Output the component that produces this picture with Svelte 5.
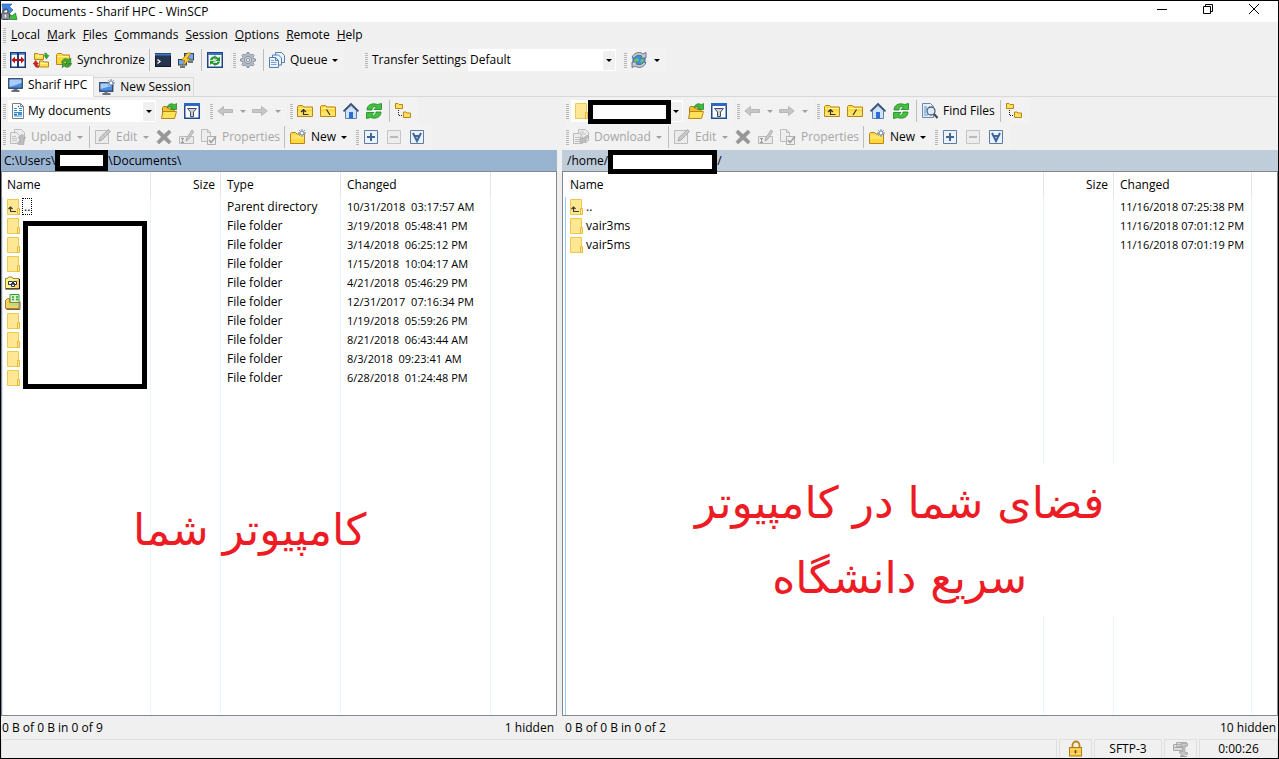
<script>
  const folder =
    '<path d="M.5 13.500v-10l1-1h4l1.500 1.500h8.500v9.500z" fill="#ffd83d" stroke="#b8861b"/><path d="M1.500 5.500h13" stroke="#fff3a6"/><path d="M1 8.500h14v4.500H1z" fill="#ffe566"/>';

  const star =
    '<path d="M12 0v8M8 4h8M9.200 1.200l5.600 5.600M14.800 1.200 9.200 6.800"/><circle cx="12" cy="4" r="2" fill="#fff"/>';

  const icons = {
    app: '<path d="M1 0h10L8.500 2.500 12 6 9 9 5.500 5.500 2 8z" fill="#3f86e6" stroke="#1f58ac" stroke-width=".6"/><path d="M8 9.500l3 2.500 3.500-3L16 15.500H8.500l1.500-2z" fill="#3ec23b" stroke="#157a1a" stroke-width=".7"/><path d="M2 9V7.500a2.500 2.500 0 0 1 5 0V9" fill="none" stroke="#555b66" stroke-width="1.500"/><rect x=".5" y="9" width="8" height="6.500" rx="1" fill="#8b919c" stroke="#444a55"/><path d="M4.500 10.500v3" stroke="#eee" stroke-width="1.500"/>',
    split: '<rect x=".75" y=".75" width="14.500" height="14.500" fill="#fff" stroke="#143a77" stroke-width="1.500"/><path d="M1 2h14" stroke="#3c73c4" stroke-width="1.500"/><path d="M8 1v14" stroke="#143a77" stroke-width="2"/><path d="M1.500 8 5 4.500V7h6V4.500L14.500 8 11 11.500V9H5v2.500z" fill="#c40d0d"/>',
    swap: '<path d="M1.500 7.500v-6H5l1 1h4.500v5z" fill="#ffdf4d" stroke="#b8861b"/><path d="M6.500 15V9H10l1 1h4.500v5z" fill="#ffdf4d" stroke="#b8861b"/><path d="M7.500 11.500H15" stroke="#fff3a6"/><path d="M2.500 4h7.500" stroke="#fff3a6"/><path d="M11.500 1c2 0 3 1 3 2.500H16L13.500 7 11 3.500h1.500z" fill="#35a834" stroke="#1c7a20" stroke-width=".5"/><path d="M5.500 15.500C2.500 15.500 1.500 14 1.500 12H0l2.700-3.500L5.500 12H4c0 1 .5 1.500 1.500 1.500z" fill="#d81f1f" stroke="#9c1010" stroke-width=".5"/>',
    sync: '<path d="M.5 12.500v-10l1-1h4L7 3h6.500v9.500z" fill="#ffd83d" stroke="#b8861b"/><path d="M1.500 4.500H13" stroke="#fff3a6"/><path d="M5.500 10.500c.7-4 5-5 7.500-2.500L14.800 6v5.500H9.500l1.700-1.700c-1.700-1-3.300-.5-4 .7z" fill="#37ae35" stroke="#1d7220" stroke-width=".6"/><path d="M15.500 11.500c-1 4-5 4.700-7.500 2.500L6.300 15.800v-4.600h4.500l-1.500 1.500c1.500 1 3.400.5 4-1.200z" fill="#37ae35" stroke="#1d7220" stroke-width=".6"/>',
    terminal: '<rect x=".5" y="1.500" width="15" height="13" fill="#26344d" stroke="#111c30"/><path d="M0 2.500h16" stroke="#3d77c9" stroke-width="2"/><path d="M2.500 7.500 5 9.500l-2.500 2" fill="none" stroke="#fff" stroke-width="1.300"/>',
    putty: '<rect x="6.500" y="1.500" width="9" height="6.500" fill="#6fa9ef" stroke="#36404f"/><path d="M10 10h5" stroke="#444d5b" stroke-width="1.500"/><rect x=".5" y="7.500" width="8" height="5.500" fill="#6fa9ef" stroke="#36404f"/><path d="M2 15h5" stroke="#444d5b" stroke-width="1.500"/><path d="M9.500 1 3.500 8.500h3.500L4.500 14 12.500 6.500H9L13 1z" fill="#ffcf2e" stroke="#a3741a" stroke-width=".8"/>',
    compare: '<rect x=".75" y=".75" width="14.500" height="14.500" fill="#fff" stroke="#1c467f" stroke-width="1.500"/><path d="M1 2h14" stroke="#3c73c4" stroke-width="2"/><path d="M8 3v12" stroke="#8fa6c4"/><path d="M3 8c.5-4 6-5 8-2l2-1.500V9H8.500L10 7.300C8.300 6 6 6.300 5.500 8z" fill="#249a2b"/><path d="M13 9.500c-.5 4-6 5-8 2L3 13V8.700h4.500L6 10.200c1.400 1.400 4 1.200 4.500-.7z" fill="#249a2b"/>',
    gear: '<g fill="#b9c1cc" stroke="#717c8c" stroke-width=".8"><path d="M7 .5h2l.4 2 1.400.6L12.500 2 14 3.500l-1.100 1.700.6 1.400 2 .4v2l-2 .4-.6 1.400 1.100 1.700-1.500 1.500-1.700-1.100-1.400.6-.4 2H7l-.4-2-1.400-.6L3.500 14 2 12.500l1.100-1.700-.6-1.400-2-.4V7l2-.4.6-1.400L2 3.500 3.500 2l1.700 1.100 1.400-.6z"/><circle cx="8" cy="8" r="3.600" fill="#d7dce3"/><circle cx="8" cy="8" r="1.600" fill="#f2f2f2"/></g>',
    queue: '<g fill="#eaf2fb" stroke="#5580b1"><path d="M6.500.500h6l3 3v7h-9z"/><path d="M3.500 3h6l3 3v7h-9z"/><path d="M.5 5.500h6l3 3v7h-9z"/></g><path d="M6.500 5.500v3h3" fill="none" stroke="#5580b1"/><path d="M2 8.500h3M2 10.500h5.500M2 12.500h5.500" stroke="#7ca3d0"/>',
    globe: '<circle cx="8" cy="8" r="6.200" fill="#3d8fe0" stroke="#2a5f9e" stroke-width=".7"/><path d="M3 8l3-2 2 2-2 3-3-1zM9.500 8l3-2 .5 3-3 2.500z" fill="#6cc46a"/><path d="M1 5.500C2.500 1 8-1 12 2L15 .5V6H9.500l1.500-1.700C8.500 2.500 5 3 3.200 6z" fill="#c3ccd6" stroke="#4f5d6d" stroke-width=".8"/><path d="M15 10.500c-1.500 4.500-7 6.500-11 3.500L1 15.500V10h5.500L5 11.700c2.500 1.800 6 1.300 7.800-1.700z" fill="#c3ccd6" stroke="#4f5d6d" stroke-width=".8"/>',
    monitor: '<rect x=".75" y="1.750" width="13.500" height="9.500" fill="#4a8fe8" stroke="#33415a" stroke-width="1.300"/><path d="M1.500 2.500h12V6l-12 4z" fill="#a9ccf8"/><path d="M5.500 12h4v1.500h-4z" fill="#6b7788"/><path d="M3.500 14h8" stroke="#3d4858" stroke-width="1.500"/>',
    monitorNew: '<rect x=".75" y="3.750" width="13" height="8.500" fill="#4a8fe8" stroke="#33415a" stroke-width="1.300"/><path d="M1.500 4.500h11v2.500l-11 3z" fill="#a9ccf8"/><path d="M5.500 12.500h3V14h-3z" fill="#6b7788"/><path d="M3.500 15h8" stroke="#3d4858" stroke-width="1.500"/><g stroke="#6f8caf">' + star + '</g>',
    doc: '<path d="M2.500.500h8l3 3v12h-11z" fill="#fff" stroke="#767f89"/><path d="M10.500.500v3h3" fill="none" stroke="#767f89"/><path d="M4 5.500h3M4 7.500h3M9 5.500h3M9 7.500h3M4 9.500h8M4 13h8" stroke="#2a8fd8"/><path d="M4 11.500h3M8 11h4M8 3.500h1" stroke="#1c6aae" stroke-width="1.500"/>',
    open: '<path d="M1.500 14.500v-10l1-1h3l1.500 1.500h6v9.500z" fill="#f3c02c" stroke="#a97b12"/><path d="M.5 15.500 2 8.500h13.500l-2 7z" fill="#ffe25a" stroke="#b8861b"/><path d="M6 5C7 .5 11 0 13.500 1.700L15.500.5V6.500h-6l1.700-2C9.500 3.500 7.500 3.500 6 5z" fill="#3dbb3a" stroke="#1c7a20" stroke-width=".7"/>',
    filter: '<rect x=".75" y=".75" width="14.500" height="14.500" fill="#fff" stroke="#1c4c94" stroke-width="1.500"/><path d="M0 1.500h16" stroke="#2e68bd" stroke-width="3"/><path d="M3.500 5.500h9L9.500 9v4.500h-3V9z" fill="#c9d0d8" stroke="#444d58"/>',
    back: '<path d="M.8 8 6.500 3.500v3h9v3h-9v3z" fill="#c6c6c6" stroke="#b2b2b2" stroke-width=".9"/>',
    forward: '<path d="M15.200 8 9.500 3.500v3h-9v3h9v3z" fill="#c6c6c6" stroke="#b2b2b2" stroke-width=".9"/>',
    up: folder + '<path d="M6.500 12V7M4 9 6.500 6.500 9 9M6 11.500h5.500" fill="none" stroke="#33322c" stroke-width="1.200"/>',
    rootBack: folder + '<path d="M6.500 6.500l3.500 5.500" stroke="#33322c" stroke-width="1.200"/>',
    rootFwd: folder + '<path d="M9.500 6.500L6 12" stroke="#33322c" stroke-width="1.200"/>',
    home: '<path d="M2.500 7.500 8 2.500l5.500 5v8h-11z" fill="#cfe4fa" stroke="#5c7fae"/><path d="M6 9h4v6.500H6z" fill="#2d6cd4"/><path d="M.5 8.300 8 1l7.500 7.300" fill="none" stroke="#364f74" stroke-width="1.700"/>',
    refresh: '<path d="M1 7C1 2 6-.5 11.500 1.500L15.500.5V6.500H8L10.500 4C8 3 6 4 6 7z" fill="#43c23f" stroke="#1b8420" stroke-width=".8"/><path d="M15 9c0 5-5 7.500-10.500 5.500L.5 15.500V9.500H8L5.500 12C8 13 10 12 10 9z" fill="#43c23f" stroke="#1b8420" stroke-width=".8"/>',
    tree: '<path d="M.5 5.500v-5H3l1 1h3.500v4zM8.500 14.500v-5.500H11l1 1h3.500v4.500z" fill="#ffe05a" stroke="#b8861b"/><path d="M3.500 7v5.500H8" fill="none" stroke="#222" stroke-dasharray="1 1"/>',
    find: '<path d="M.5.5h8l3 3v11H.5z" fill="#e6f0fa" stroke="#6489b5"/><path d="M2 4h3M2 6h3M2 8h2M2 10h2M2 12h4" stroke="#5b90cc"/><circle cx="9" cy="8" r="4" fill="#dcebf9" stroke="#53606f" stroke-width="1.300"/><path d="m12 11 3.500 4" stroke="#3b4654" stroke-width="2"/>',
    newFolder: '<path d="M.5 14.500V4.500l1-1h4L7 5h7.500v9.500z" fill="#ffd83d" stroke="#b8861b"/><path d="M1 9h13M1.500 7h12" stroke="#fff09a"/><g stroke="#6f8caf">' + star + '</g>',
    upload: '<g fill="#ececec" stroke="#bcbcbc"><path d="M4.500.500h7l3 3v8h-10z"/><path d="M.5 3.500h6l3 3v8h-9z"/></g><path d="M2 7.500h4M2 9.500h5M2 11.500h5" stroke="#c2c2c2"/><path d="M12 5l4 4h-2v6.500H8V13h2.500V9H8z" fill="#bdbdbd" stroke="#a8a8a8" stroke-width=".6"/>',
    download: '<g fill="#ececec" stroke="#bcbcbc"><path d="M5.500.500h7l3 3v8h-10z"/><path d="M.5 4.500h6l3 3v7h-9z"/></g><path d="M2 8.500h4M2 10.500h5M2 12.500h5M7 3h4M7 5h6" stroke="#c2c2c2"/><path d="M14.500 6 16 7.500l-4 4 2 2H7V7.500l2.500 2z" fill="#bdbdbd" stroke="#a8a8a8" stroke-width=".6"/>',
    edit: '<path d="M.5 1.500h13v13H.5z" fill="#ebebeb" stroke="#bdbdbd"/><path d="m4 12 1-3.500 8.500-8 2 2-8.500 8.500z" fill="#c9c9c9" stroke="#a5a5a5" stroke-width=".9"/>',
    del: '<path d="M4 1 9 5.500 14 1l2 2.500L11.500 8l4.500 4.500-2 2.500L9 10.500 4 15l-2-2.500L6.500 8 2 3.500z" fill="#979797" stroke="#868686" stroke-width=".5"/>',
    rename: '<path d="M1.500 7.500h14v7h-14z" fill="#ebebeb" stroke="#b9b9b9"/><path d="M3 9.500h3M3 13.500h3M4.500 9.500v4" stroke="#999"/><path d="m8 12 .8-3L14 1l1.700 1.500-5.200 8z" fill="#cecece" stroke="#a5a5a5" stroke-width=".9"/>',
    props: '<path d="M.5.500h6l3 3v9h-9z" fill="#ededed" stroke="#bdbdbd"/><path d="M6.500.500v3h3" fill="none" stroke="#bdbdbd"/><path d="M6.500 7.500h8v8h-8z" fill="#f0f0f0" stroke="#b0b0b0"/><path d="m8 11 2 2.500L15 7.500" fill="none" stroke="#a1a1a1" stroke-width="1.600"/>',
    plus: '<path d="M1.500 1.500h13v13h-13z" fill="#eaf2fc" stroke="#5f7ca3"/><path d="M8 4v8M4 8h8" stroke="#416597" stroke-width="2"/>',
    minus: '<path d="M1.500 1.500h13v13h-13z" fill="#ededed" stroke="#c5c5c5"/><path d="M4 8h8" stroke="#bbb" stroke-width="2"/>',
    invert: '<path d="M1.500 1.500h13v13h-13z" fill="#eaf2fc" stroke="#5f7ca3"/><path d="m4 4 4 8 4-8M5.500 7h5" fill="none" stroke="#416597" stroke-width="2"/>',
    dir: '<path d="M2.500.5H13.500v15h-11z" fill="#ffe794" stroke="#efc94c"/><path d="M12.500 9.500h2v6h-2z" fill="#ffe794" stroke="#e5b93c"/>',
    parent: '<path d="M2.500.5H13.500v15h-11z" fill="#ffe794" stroke="#efc94c"/><path d="M12.500 9.500h2v6h-2z" fill="#ffe794" stroke="#e5b93c"/><path d="M5.500 12V8M3.500 10 5.500 8l2 2M5 12.500h6" fill="none" stroke="#403c30" stroke-width="1.200"/>',
    shortcut: '<path d="M.5 13.500v-10h2l1-1.500h3.500l1 1.500h6v10z" fill="#fff48c" stroke="#a48a1a"/><path d="M10 5h4v8h-4z" fill="#ffd26b"/><path d="M.5 14h14V4" fill="none" stroke="#111"/><g fill="#fff" stroke="#26304a"><path d="M3.500 6.500h4v3h-4zM8.500 6.500h3v3h-3zM6.500 8.500h3v3h-3z"/></g>',
    library: '<path d="M5 .5h9v9H5z" fill="#d8f5cd" stroke="#2f9e37"/><path d="M7 3h2M11 3h2M7 5.500h2M11 5.500h2" stroke="#2f9e37" stroke-width="1.500"/><path d="M.5 14.500V6.500l2-2h2v4H14v6z" fill="#f6d25c" stroke="#b27c1d"/><path d="M4 9h9.500v2.500H4z" fill="#a9e08f"/><path d="M1.500 15.500H15v-8" fill="none" stroke="#666"/>',
    lock: '<path d="M4.500 7V4a3.500 3.500 0 0 1 7 0v3" fill="none" stroke="#b9851a" stroke-width="1.800"/><rect x="1.500" y="6.500" width="12" height="8.500" fill="#ffc93a" stroke="#b07b13"/><path d="M2 9h11M2 12.500h11" stroke="#ffe38b"/><path d="M7.500 9v3.500" stroke="#6b4a0b" stroke-width="1.600"/>',
    zip: '<path d="M3.500 1.500h10v4h-10zM.5 3.500h9v3h-9zM.5 6.500h9v3h-9z" fill="#dadada" stroke="#ababab"/><path d="M8 2.500h6.500v2.500H12v6.500h2.500v2H12L10.500 15H8v-3H6.500v-1.500H10V5H8z" fill="#c6c6c6" stroke="#a7a7a7" stroke-width=".8"/><path d="M7 15.500h7" stroke="#a0a0a0"/>'
  };

  const menu = ['Local', 'Mark', 'Files', 'Commands', 'Session', 'Options', 'Remote', 'Help'];

  const localRows = [
    ['parent', '..', 'Parent directory', '10/31/2018  03:17:57 AM'],
    ['dir', '', 'File folder', '3/19/2018  05:48:41 PM'],
    ['dir', '', 'File folder', '3/14/2018  06:25:12 PM'],
    ['dir', '', 'File folder', '1/15/2018  10:04:17 AM'],
    ['shortcut', '', 'File folder', '4/21/2018  05:46:29 PM'],
    ['library', '', 'File folder', '12/31/2017  07:16:34 PM'],
    ['dir', '', 'File folder', '1/19/2018  05:59:26 PM'],
    ['dir', '', 'File folder', '8/21/2018  06:43:44 AM'],
    ['dir', '', 'File folder', '8/3/2018  09:23:41 AM'],
    ['dir', '', 'File folder', '6/28/2018  01:24:48 PM']
  ];

  const remoteRows = [
    ['parent', '..', '11/16/2018 07:25:38 PM'],
    ['dir', 'vair3ms', '11/16/2018 07:01:12 PM'],
    ['dir', 'vair5ms', '11/16/2018 07:01:19 PM']
  ];
</script>

{#snippet icon(name)}
  <svg class="icon" viewBox="0 0 16 16" aria-hidden="true">{@html icons[name]}</svg>
{/snippet}

{#snippet tool(name, title, disabled = false)}
  <button class="tool" aria-label={title} {disabled}>{@render icon(name)}</button>
{/snippet}

{#snippet labelled(name, text, size, disabled = false)}
  <button class="tool labelled {size}" {disabled}>{@render icon(name)}<span>{text}</span></button>
{/snippet}

{#snippet drop(title, disabled = false)}
  <button class="drop" aria-label={title} {disabled}><span class="caret"></span></button>
{/snippet}

{#snippet navigation(root)}
  <div class="band">
    <i class="grip"></i>
    {@render tool('back', 'Back', true)}{@render drop('Back history', true)}
    {@render tool('forward', 'Forward', true)}{@render drop('Forward history', true)}
  </div>
  <div class="band">
    <i class="grip"></i>
    {@render tool('up', 'Parent directory')}
    {@render tool(root, 'Root directory')}
    {@render tool('home', 'Home directory')}
    {@render tool('refresh', 'Refresh')}
    <i class="sep"></i>
    {#if root === 'rootFwd'}
      {@render labelled('find', 'Find Files', 'w-find')}
      <i class="sep"></i>
    {/if}
    {@render tool('tree', 'Directory tree')}
  </div>
{/snippet}

{#snippet fileTools(name, text, size)}
  <div class="bar">
    <div class="band">
      <i class="grip"></i>
      {@render labelled(name, text, size, true)}{@render drop(text + ' options', true)}
      <i class="sep"></i>
      {@render labelled('edit', 'Edit', 'w-edit', true)}{@render drop('Edit options', true)}
      {@render tool('del', 'Delete', true)}
      {@render tool('rename', 'Rename', true)}
      {@render labelled('props', 'Properties', 'w-props', true)}
      <i class="sep"></i>
      {@render labelled('newFolder', 'New', 'w-new')}{@render drop('New options')}
    </div>
    <div class="band">
      <i class="grip"></i>
      {@render tool('plus', 'Select files')}
      {@render tool('minus', 'Unselect files', true)}
      {@render tool('invert', 'Invert selection')}
    </div>
  </div>
{/snippet}

<div class="window">
  <header class="title">
    {@render icon('app')}
    <span class="caption">Documents - Sharif HPC - WinSCP</span>
    <button class="win" aria-label="Minimize"><svg viewBox="0 0 10 10"><path d="M0 5.500h10" /></svg></button>
    <button class="win" aria-label="Restore"><svg viewBox="0 0 10 10"><path d="M.5 2.500h7v7h-7zM2.500 2.500v-2h7v7h-2" /></svg></button>
    <button class="win" aria-label="Close"><svg viewBox="0 0 10 10"><path d="m0 0 10 10M10 0 0 10" /></svg></button>
  </header>

  <nav class="menu">
    <i class="grip"></i>
    {#each menu as item}
      <button><u>{item[0]}</u>{item.slice(1)}</button>
    {/each}
  </nav>

  <div class="bar">
    <div class="band">
      <i class="grip"></i>
      {@render tool('split', 'Compare directories')}
      {@render tool('swap', 'Keep remote directory up to date')}
      {@render labelled('sync', 'Synchronize', 'w-sync')}
      <i class="sep"></i>
      {@render tool('terminal', 'Console')}
      {@render tool('putty', 'Open session in PuTTY')}
      <i class="sep"></i>
      {@render tool('compare', 'Synchronize browsing')}
    </div>
    <div class="band">
      <i class="grip"></i>
      {@render tool('gear', 'Preferences')}
      <i class="sep"></i>
      {@render labelled('queue', 'Queue', 'w-queue')}{@render drop('Queue options')}
    </div>
    <div class="band transfer">
      <i class="grip"></i>
      <label for="preset">Transfer Settings</label>
      <div class="combo">
        <select id="preset"><option>Default</option></select>
        <span class="arrow"><span class="caret"></span></span>
      </div>
    </div>
    <div class="band">
      <i class="grip"></i>
      {@render tool('globe', 'Transfer options')}{@render drop('Transfer options menu')}
    </div>
  </div>

  <div class="tabs">
    <button class="tab active">{@render icon('monitor')}<span>Sharif HPC</span></button>
    <button class="tab">{@render icon('monitorNew')}<span>New Session</span></button>
    <span class="rest"></span>
  </div>

  <main>
    <section>
      <div class="bar">
        <div class="band">
          <i class="grip"></i>
          <div class="combo">
            {@render icon('doc')}
            <select aria-label="Local directory"><option>My documents</option></select>
            <span class="arrow"><span class="caret"></span></span>
          </div>
          {@render tool('open', 'Open directory')}
          {@render tool('filter', 'Filter')}
        </div>
        {@render navigation('rootBack')}
      </div>
      {@render fileTools('upload', 'Upload', 'w-up')}
      <div class="path active">C:\Users\<span class="blank short"></span>\Documents\</div>
      <div class="list">
        <table>
          <colgroup><col class="c-name" /><col class="c-size" /><col class="c-type" /><col class="c-date" /><col /></colgroup>
          <thead>
            <tr><th>Name</th><th class="num">Size</th><th>Type</th><th>Changed</th><th></th></tr>
          </thead>
          <tbody>
            {#each localRows as [kind, name, type, changed]}
              <tr>
                <td class="name">{@render icon(kind)}{#if name}<span class="focus">{name}</span>{/if}</td>
                <td></td><td>{type}</td><td class="stamp">{changed}</td><td></td>
              </tr>
            {/each}
            <tr class="fill"><td></td><td></td><td></td><td></td><td></td></tr>
          </tbody>
        </table>
        <span class="blank names"></span>
        <p class="note local" lang="fa" dir="rtl">کامپیوتر شما</p>
      </div>
      <div class="count"><span>0 B of 0 B in 0 of 9</span><span>1 hidden</span></div>
    </section>

    <section class="far">
      <div class="bar">
        <div class="band">
          <i class="grip"></i>
          <div class="combo narrow">
            {@render icon('dir')}
            <select aria-label="Remote directory"><option></option></select>
            <span class="arrow"><span class="caret"></span></span>
            <span class="blank over"></span>
          </div>
          {@render tool('open', 'Open directory')}
          {@render tool('filter', 'Filter')}
        </div>
        {@render navigation('rootFwd')}
      </div>
      {@render fileTools('download', 'Download', 'w-down')}
      <div class="path">/home/<span class="blank long"></span>/</div>
      <div class="list">
        <table>
          <colgroup><col class="c-wide" /><col class="c-size" /><col class="c-stamp" /><col /></colgroup>
          <thead>
            <tr><th>Name</th><th class="num">Size</th><th>Changed</th><th></th></tr>
          </thead>
          <tbody>
            {#each remoteRows as [kind, name, changed]}
              <tr>
                <td class="name">{@render icon(kind)}<span>{name}</span></td>
                <td></td><td class="stamp">{changed}</td><td></td>
              </tr>
            {/each}
            <tr class="fill"><td></td><td></td><td></td><td></td></tr>
          </tbody>
        </table>
        <p class="note remote" lang="fa" dir="rtl">فضای شما در کامپیوتر<br />سریع دانشگاه</p>
      </div>
      <div class="count"><span>0 B of 0 B in 0 of 2</span><span>10 hidden</span></div>
    </section>
  </main>

  <footer>
    <span class="cell grow"></span>
    <span class="cell small">{@render icon('lock')}</span>
    <span class="cell proto">SFTP-3</span>
    <span class="cell small">{@render icon('zip')}</span>
    <span class="cell time">0:00:26</span>
  </footer>
</div>

<style>
  :global(body) {
    margin: 0;
  }

  .window {
    box-sizing: border-box;
    height: 100vh;
    display: flex;
    flex-direction: column;
    border: 1px solid #000;
    background: #f0f0f0;
    color: #000;
    font: 12px/16px 'Open Sans', 'Noto Sans', sans-serif;
    overflow: hidden;
  }

  button,
  select {
    font: inherit;
    color: inherit;
    background: none;
    border: 0;
    border-radius: 0;
    padding: 0;
    margin: 0;
    white-space: nowrap;
  }

  .icon {
    width: 16px;
    height: 16px;
    flex: none;
    overflow: visible;
  }

  .title {
    display: flex;
    align-items: center;
    height: 21px;
    padding-right: 1px;
    background: #fff;
  }

  .caption {
    flex: 1;
    padding-left: 5px;
  }

  .win {
    width: 46px;
    height: 18px;
    margin-bottom: 3px;
  }

  .win svg {
    width: 10px;
    height: 10px;
    fill: none;
    stroke: #000;
  }

  .menu {
    display: flex;
    align-items: center;
    box-sizing: border-box;
    height: 25px;
    padding: 1px 0 0 2px;
  }

  .menu button {
    padding: 0 4px 0 3px;
  }

  .menu .grip {
    margin-right: 2px;
  }

  .grip {
    width: 3px;
    height: 15px;
    margin: 0 1px 0 0;
    flex: none;
    background: repeating-linear-gradient(#b6b6b6 0 1px, transparent 1px 2px);
  }

  .sep {
    width: 1px;
    height: 22px;
    margin: 0 2px 0 3px;
    background: #bdbdbd;
  }

  .bar {
    display: flex;
    height: 26px;
    padding-left: 1px;
    gap: 2px;
  }

  .far .bar {
    padding-left: 3px;
  }

  .band {
    display: flex;
    align-items: center;
    padding: 0 3px 0 1px;
    background: #f2f2f2;
    border-radius: 2px;
  }

  .tool {
    display: flex;
    align-items: center;
    box-sizing: border-box;
    width: 23px;
    height: 22px;
    padding-left: 3px;
  }

  .labelled {
    gap: 5px;
  }

  .tool:disabled {
    color: #a6a6a6;
  }

  .w-sync { width: 93px; }
  .w-queue { width: 63px; }
  .w-up { width: 67px; }
  .w-down { width: 83px; }
  .w-edit { width: 48px; }
  .w-props { width: 83px; }
  .w-new { width: 51px; }
  .w-find { width: 78px; }

  .drop {
    width: 12px;
    height: 22px;
    display: flex;
    align-items: center;
    justify-content: center;
  }

  .caret {
    border: 3px solid transparent;
    border-top-color: #000;
    border-bottom: 0;
  }

  .drop:disabled .caret {
    border-top-color: #a0a0a0;
  }

  .transfer {
    margin-left: 18px;
  }

  .transfer label {
    width: 98px;
    padding-left: 3px;
    box-sizing: border-box;
    white-space: nowrap;
  }

  .combo {
    position: relative;
    display: flex;
    align-items: center;
    box-sizing: border-box;
    width: 148px;
    height: 22px;
    margin: 0 2px 0 1px;
    padding-left: 1px;
    background: #fff;
    border: 1px solid #fff;
  }

  .narrow {
    width: 112px;
  }

  .combo select {
    appearance: none;
    flex: 1;
    min-width: 0;
    height: 20px;
    outline: 0;
  }

  .combo .icon + select {
    padding-left: 2px;
  }

  .arrow {
    width: 12px;
    height: 19px;
    display: flex;
    align-items: center;
    justify-content: center;
    background: #f0f0f0;
    pointer-events: none;
  }

  .tabs {
    display: flex;
    align-items: flex-end;
    height: 24px;
  }

  .tab {
    display: flex;
    align-items: center;
    gap: 5px;
    box-sizing: border-box;
    height: 20px;
    padding: 0 2px 0 5px;
    border: 1px solid #d9d9d9;
    border-left: 0;
    white-space: nowrap;
  }

  .tab.active {
    height: 22px;
    gap: 4px;
    padding: 0 6px 2px 7px;
    background: #fff;
    border-bottom-color: #fff;
    border-top-color: #e4e4e4;
  }

  .rest {
    flex: 1;
    border-bottom: 1px solid #d9d9d9;
  }

  main {
    flex: 1;
    min-height: 0;
    display: grid;
    grid-template-columns: minmax(0, 556fr) minmax(0, 716fr);
    column-gap: 5px;
    padding-top: 1px;
  }

  section {
    display: flex;
    flex-direction: column;
    min-width: 0;
    min-height: 0;
  }

  .path {
    display: flex;
    align-items: center;
    height: 21px;
    padding-left: 5px;
    background: #bfcddb;
    white-space: nowrap;
  }

  .path.active {
    padding-left: 3px;
    background: #99b4d1;
  }

  .blank {
    box-sizing: border-box;
    border: 5px solid #000;
    background: #fff;
    flex: none;
  }

  .short {
    width: 53px;
    height: 21px;
  }

  .long {
    position: relative;
    z-index: 1;
    width: 109px;
    height: 24px;
    margin-bottom: -3px;
  }

  .over {
    position: absolute;
    left: 16px;
    top: -1px;
    width: 83px;
    height: 24px;
  }

  .names {
    position: absolute;
    left: 21px;
    top: 49px;
    width: 124px;
    height: 168px;
  }

  .list {
    position: relative;
    flex: 1;
    min-height: 0;
    background: #fff;
    border: 1px solid #828790;
    overflow: hidden;
  }

  table {
    width: 100%;
    height: 100%;
    table-layout: fixed;
    border-collapse: separate;
    border-spacing: 0;
  }

  .c-name { width: 149px; }
  .c-wide { width: 481px; }
  .c-size { width: 70px; }
  .c-type { width: 120px; }
  .c-date { width: 150px; }
  .c-stamp { width: 138px; }

  th,
  td {
    box-sizing: border-box;
    padding: 0 5px 0 6px;
    border-right: 1px solid #ebf3fd;
    text-align: left;
    font-weight: 400;
    white-space: pre;
    overflow: hidden;
  }

  th {
    height: 25px;
    border-color: #e5e5e5;
  }

  td {
    height: 19px;
  }

  th:first-child {
    padding-left: 5px;
  }

  .far th:first-child {
    padding-left: 7px;
  }

  td:first-child {
    background: linear-gradient(#dbe8fb, #dbe8fb) 0 0 / 1px 100% no-repeat;
  }

  .far td:first-child {
    background: linear-gradient(#99c9f5, #99c9f5) 2px 0 / 1px 100% no-repeat;
  }

  th:last-child,
  td:last-child {
    border-right: 0;
  }

  .num {
    text-align: right;
  }

  .stamp {
    font-size: 11px;
  }

  .fill td {
    height: auto;
  }

  .name {
    padding: 0 0 0 3px;
  }

  .far .name {
    padding-left: 5px;
  }

  .name .icon {
    vertical-align: top;
  }

  .name span {
    margin-left: 2px;
  }

  .name .focus {
    margin-left: 1px;
    padding: 0 2px;
    outline: 1px dotted #000;
    outline-offset: -1px;
  }

  .note {
    position: absolute;
    margin: 0;
    color: #ed1c24;
    font: 44px/75px 'DejaVu Sans', sans-serif;
    white-space: nowrap;
    text-align: center;
  }

  .local {
    left: 131px;
    top: 320px;
  }

  .remote {
    left: 120px;
    top: 293px;
    padding: 0 12px;
    background: #fff;
  }

  .count {
    display: flex;
    justify-content: space-between;
    align-items: center;
    box-sizing: border-box;
    height: 22px;
    padding: 2px 3px 0 1px;
  }

  .far .count {
    padding-right: 2px;
    padding-left: 3px;
  }

  footer {
    display: flex;
    gap: 2px;
    height: 19px;
    margin-top: 1px;
  }

  .cell {
    display: flex;
    align-items: center;
    justify-content: center;
    box-sizing: border-box;
    border: 1px solid #dfdfdf;
    border-bottom: 0;
  }

  .grow {
    flex: 1;
  }

  .small { width: 33px; }
  .proto { width: 68px; }
  .time { width: 79px; }
</style>
